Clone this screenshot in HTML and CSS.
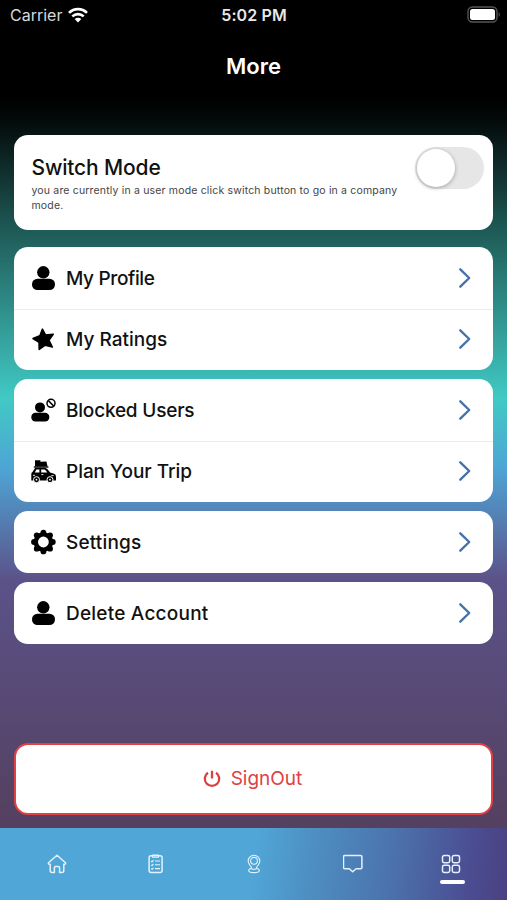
FILE: index.html
```html
<!DOCTYPE html>
<html lang="en">
<head>
    <meta charset="UTF-8">
    <meta name="viewport" content="width=device-width, initial-scale=1.0">
    <title>More</title>
    <link rel="stylesheet" href="styles.css">
</head>
<body>
    <!-- shared icons -->
    <svg class="sprite" aria-hidden="true">
        <symbol id="user" viewBox="0 0 26 26">
            <circle cx="13.3" cy="7.3" r="6.2"/>
            <rect x="2" y="13.7" width="23" height="11.4" rx="5.5"/>
        </symbol>
        <symbol id="chevron" viewBox="0 0 14 22">
            <path d="M2.3 2.3 11.2 11 2.3 19.7" fill="none" stroke="#4573aa" stroke-width="2.4" stroke-linecap="round" stroke-linejoin="round"/>
        </symbol>
    </svg>

    <div class="phone">
        <div class="status-bar">
            <div class="carrier">
                <span>Carrier</span>
                <svg class="wifi" viewBox="0 0 20 16">
                    <g fill="none" stroke="#fff" stroke-width="2.6">
                        <path d="M1 5.9C6 .8 14 .8 19 5.9"/>
                        <path d="M4.3 9.4C7.5 6.3 12.5 6.3 15.7 9.4"/>
                    </g>
                    <path d="M10 15.4 6.7 12.1C8.5 10.4 11.5 10.4 13.3 12.1Z" fill="#fff"/>
                </svg>
            </div>
            <div class="time">5:02 PM</div>
            <svg class="battery" viewBox="0 0 34 17">
                <rect x="1" y="1" width="29" height="15" rx="4.5" fill="none" stroke="#555" stroke-width="1.4"/>
                <rect x="3" y="3" width="25" height="11" rx="2.5" fill="#fff"/>
                <path d="M31.6 6.2c1.7.8 1.7 3.8 0 4.6z" fill="#555"/>
            </svg>
        </div>

        <h1 class="title">More</h1>

        <div class="content">
            <div class="card switch-card">
                <div class="switch-text">
                    <h2>Switch Mode</h2>
                    <p>you are currently in a user mode click switch button to go in a company<br>mode.</p>
                </div>
                <div class="toggle"><span class="knob"></span></div>
            </div>

            <div class="card">
                <div class="row">
                    <svg class="icon"><use href="#user"/></svg>
                    <span class="label profile">My Profile</span>
                    <svg class="chevron"><use href="#chevron"/></svg>
                </div>
                <div class="row">
                    <svg class="icon" viewBox="0 0 26 26">
                        <path d="M12.4 3.2 15.6 9.1 23.2 8.2 18.9 14.2 22.3 21 15.2 19.2 9.2 23.4 9.1 16.3 3 12.6 9.9 9.8Z" stroke="#000" stroke-width="1.6" stroke-linejoin="round"/>
                    </svg>
                    <span class="label">My Ratings</span>
                    <svg class="chevron"><use href="#chevron"/></svg>
                </div>
            </div>

            <div class="card">
                <div class="row">
                    <svg class="icon" viewBox="0 0 26 26">
                        <circle cx="10" cy="10.4" r="5"/>
                        <rect x="1.3" y="15.8" width="18" height="8.8" rx="4.2"/>
                        <circle cx="21" cy="6.3" r="4" fill="none" stroke="#000" stroke-width="1.5"/>
                        <path d="m18.3 3.6 5.4 5.4" stroke="#000" stroke-width="1.5"/>
                    </svg>
                    <span class="label blocked">Blocked Users</span>
                    <svg class="chevron"><use href="#chevron"/></svg>
                </div>
                <div class="row">
                    <svg class="icon" viewBox="0 0 26 26">
                        <path d="M5 2.3h5.4v1.500l6-.4 1.200 5H5z"/>
                        <path d="M3.8 9h14.6" stroke="#000" stroke-width="1.4"/>
                        <path d="M5.2 9.7h9.5q1.6 0 2.8 1.5l2.6 3.3 4 1.3q1.900.7 1.900 3v3.800H1.300v-6.700q0-1.400 1.200-2z"/>
                        <path d="M6.4 11.5h3v3H4.8zM11.2 11.5h2.8q1 0 1.8 1l1.500 2h-6.100z" fill="#fff"/>
                        <path d="M3 17.300h2M21.300 17.600h2.400M11.400 16.600h2" stroke="#fff" stroke-width=".9"/>
                        <circle cx="6.5" cy="21.7" r="3" stroke="#fff"/>
                        <circle cx="20" cy="21.7" r="3" stroke="#fff"/>
                        <circle cx="6.5" cy="21.7" r=".9" fill="#fff"/>
                        <circle cx="20" cy="21.7" r=".9" fill="#fff"/>
                    </svg>
                    <span class="label trip">Plan Your Trip</span>
                    <svg class="chevron"><use href="#chevron"/></svg>
                </div>
            </div>

            <div class="card">
                <div class="row">
                    <svg class="icon" viewBox="0 0 26 26">
                        <circle cx="13.4" cy="13" r="7.6" fill="none" stroke="#000" stroke-width="4.4"/>
                        <g>
                            <circle cx="13.4" cy="3.6" r="2.9"/>
                            <circle cx="20.05" cy="6.35" r="2.9"/>
                            <circle cx="22.8" cy="13" r="2.9"/>
                            <circle cx="20.05" cy="19.65" r="2.9"/>
                            <circle cx="13.4" cy="22.4" r="2.9"/>
                            <circle cx="6.75" cy="19.65" r="2.9"/>
                            <circle cx="4" cy="13" r="2.9"/>
                            <circle cx="6.75" cy="6.35" r="2.9"/>
                        </g>
                    </svg>
                    <span class="label settings">Settings</span>
                    <svg class="chevron"><use href="#chevron"/></svg>
                </div>
            </div>

            <div class="card">
                <div class="row">
                    <svg class="icon"><use href="#user"/></svg>
                    <span class="label delete">Delete Account</span>
                    <svg class="chevron"><use href="#chevron"/></svg>
                </div>
            </div>
        </div>

        <button class="signout">
            <svg class="power" viewBox="0 0 18 18">
                <path d="M5 2.7a7.2 7.2 0 1 0 8 0M9 .8v7.6" fill="none" stroke="#da4043" stroke-width="2.3"/>
            </svg>
            <span>SignOut</span>
        </button>

        <div class="tab-bar">
            <div class="tab">
                <svg viewBox="0 0 20 20">
                    <path d="M10 1.3 1.5 8.8q-.5 1.3.9 1.4h.8v6.3q0 2 2 2h2.2v-4.7q0-1.2 1.2-1.2h2.8q1.2 0 1.2 1.2v4.7h2.2q2 0 2-2v-6.3h.8q1.4-.1.9-1.4Z"/>
                </svg>
            </div>
            <div class="tab">
                <svg viewBox="0 0 20 20">
                    <rect x="3.1" y="1.8" width="13" height="16.8" rx="2"/>
                    <path d="M6.5 1h6v2.3h-6zM5.2 7l.8.8 1.5-1.6M9 7h5M5.2 10.8l.8.8L7.5 10M9 10.8h5M5.2 14.6l.8.8 1.5-1.6M9 14.6h5" stroke-width="1.1"/>
                </svg>
            </div>
            <div class="tab pin">
                <svg viewBox="0 0 20 20">
                    <path d="M8 15.200q-.5-2.200-2.200-4.200a5.800 5.800 0 1 1 8.400 0q-1.700 2-2.200 4.200z"/>
                    <circle cx="10" cy="6.8" r="3.4"/>
                    <path d="M7.600 14.200q-2.900.7-2.900 2.300 0 2.100 5.300 2.100t5.300-2.100q0-1.600-2.900-2.300"/>
                </svg>
            </div>
            <div class="tab">
                <svg viewBox="0 0 20 20">
                    <path d="M1.8 1.5h15.8q1.3 0 1.3 1.3v10.6q0 1.3-1.3 1.3h-4.5L9.7 17.7l-3.4-3H1.8q-1.3 0-1.3-1.3V2.8q0-1.3 1.3-1.3Z"/>
                </svg>
            </div>
            <div class="tab active">
                <svg viewBox="0 0 20 20">
                    <rect x="1.5" y="1.5" width="7.2" height="7.2" rx="1.7"/>
                    <rect x="11.3" y="1.5" width="7.2" height="7.2" rx="1.7"/>
                    <rect x="1.5" y="11.3" width="7.2" height="7.2" rx="1.7"/>
                    <rect x="11.3" y="11.3" width="7.2" height="7.2" rx="1.7"/>
                </svg>
            </div>
        </div>
    </div>
</body>
</html>
```
FILE: styles.css
```css
* {
    margin: 0;
    padding: 0;
    box-sizing: border-box;
}

body {
    font-family: 'Inter', 'Open Sans', sans-serif;
    background: #000;
    color: #111;
}

.sprite {
    display: none;
}

.phone {
    width: 507px;
    height: 900px;
    display: flex;
    flex-direction: column;
    overflow: hidden;
    background: linear-gradient(180deg, #000 98px, #030a0a 120px, #205f5b 237px, #41c9c4 398px, #4ea5d5 468px, #5b5289 580px, #54405f 828px);
}

.status-bar {
    height: 30px;
    display: grid;
    grid-template-columns: 1fr auto 1fr;
    align-items: center;
    padding: 0 6px 1px 10px;
    color: #fff;
}

.carrier {
    display: flex;
    align-items: center;
    gap: 6px;
    font-size: 16px;
    color: #d8d8d8;
}

.wifi {
    width: 20px;
    height: 16px;
}

.time {
    font-size: 16px;
    font-weight: 600;
    letter-spacing: 0.1px;
    margin-right: 3px;
    color: #e8e8e8;
}

.battery {
    width: 34px;
    height: 17px;
    justify-self: end;
}

.title {
    height: 72px;
    margin-bottom: 33px;
    line-height: 72px;
    text-align: center;
    font-size: 22px;
    font-weight: 600;
    color: #fff;
}

.content {
    display: flex;
    flex-direction: column;
    gap: 8.8px;
    padding: 0 14px;
}

.card {
    background: #fff;
    border-radius: 14px;
}

.switch-card {
    height: 94.5px;
    display: flex;
    justify-content: space-between;
    padding: 12px 9px 0 17.5px;
    margin-bottom: 9px;
}

.switch-text {
    padding-top: 8px;
    white-space: nowrap;
}

.switch-text h2 {
    font-size: 21px;
    line-height: 26px;
    font-weight: 500;
    letter-spacing: -0.15px;
}

.switch-text p {
    margin-top: 2px;
    font-size: 10.5px;
    line-height: 15px;
    letter-spacing: 0.17px;
    color: #444;
}

.toggle {
    width: 69px;
    height: 42px;
    padding: 1.5px;
    border-radius: 21px;
    background: #e6e6e6;
}

.knob {
    display: block;
    width: 38.5px;
    height: 38.5px;
    border-radius: 50%;
    background: #fff;
    box-shadow: 0 1px 4px rgba(0, 0, 0, 0.3);
}

.row {
    height: 62px;
    display: flex;
    align-items: center;
    padding: 0 21px 0 16px;
}

.row + .row {
    height: 61px;
    padding-bottom: 2px;
    border-top: 1px solid #ececec;
}

.icon {
    width: 26px;
    height: 26px;
}

.label {
    flex: 1;
    margin-left: 10px;
    font-size: 19px;
    font-weight: 500;
    white-space: nowrap;
}

.profile {
    letter-spacing: -0.35px;
}

.blocked {
    letter-spacing: -0.2px;
}

.trip {
    letter-spacing: -0.05px;
}

.settings {
    padding-top: 1px;
    letter-spacing: 0.15px;
}

.delete {
    padding-top: 1px;
    letter-spacing: 0.22px;
}

.chevron {
    width: 14px;
    height: 22px;
}

.signout {
    height: 72px;
    margin: auto 14px 13.5px;
    padding-right: 2px;
    display: flex;
    align-items: center;
    justify-content: center;
    gap: 10px;
    border: 2px solid #e04144;
    border-radius: 14px;
    background: #fff;
    font-family: inherit;
    font-size: 19px;
    color: #e04144;
}

.power {
    width: 18px;
    height: 18px;
}

.tab-bar {
    height: 72px;
    flex-shrink: 0;
    display: flex;
    justify-content: space-between;
    padding: 26px 46px 0 47px;
    background: linear-gradient(97deg, #50a6d7 50%, #4e8fc2 61%, #4b72ac 77%, #4b4d92 92%, #4a4181 100%);
}

.tab {
    display: flex;
    flex-direction: column;
    align-items: center;
    width: 20px;
}

.tab svg {
    width: 20px;
    height: 20px;
    flex-shrink: 0;
    fill: none;
    stroke: #e3f2fb;
    stroke-width: 1.5;
    stroke-linejoin: round;
}

.tab.pin svg {
    stroke-width: 1.1;
}

.tab.active::after {
    content: '';
    width: 25px;
    height: 4px;
    margin-top: 6px;
    margin-left: 3px;
    border-radius: 2px;
    background: #fff;
    flex-shrink: 0;
}
```
